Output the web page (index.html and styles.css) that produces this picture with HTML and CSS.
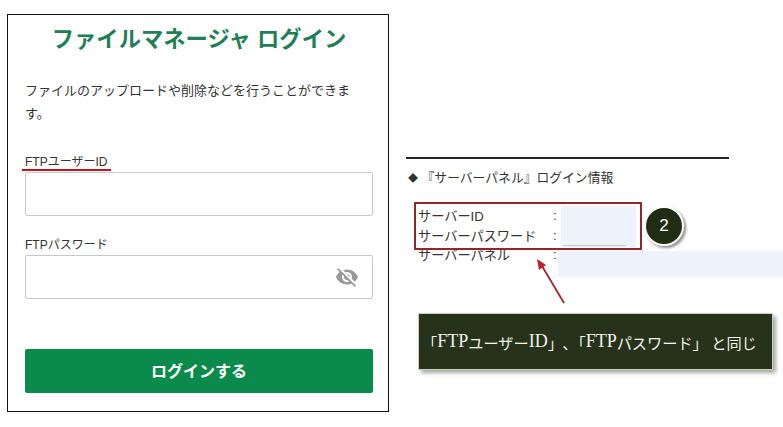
FILE: index.html
```html
<!DOCTYPE html>
<html lang="ja">
<head>
  <meta charset="UTF-8">
  <title>ファイルマネージャ ログイン</title>
  <link rel="stylesheet" href="styles.css">
</head>
<body>

  <div class="page">
    <!-- Login card -->
    <div class="card">
      <h1 class="title">ファイルマネージャ ログイン</h1>
      <p class="lead">ファイルのアップロードや削除などを行うことができます。</p>

      <label class="label label-marked">FTPユーザーID</label>
      <div class="input"></div>

      <label class="label label-pass">FTPパスワード</label>
      <div class="input input-pass">
        <svg class="eye" viewBox="0 0 24 24" width="24" height="24">
          <path d="M12 7c2.76 0 5 2.24 5 5 0 .65-.13 1.26-.36 1.83l2.92 2.92c1.51-1.26 2.7-2.89 3.43-4.75-1.73-4.39-6-7.5-11-7.5-1.4 0-2.74.25-3.98.7l2.16 2.16C10.74 7.13 11.35 7 12 7zM2 4.27l2.28 2.28.46.46C3.08 8.3 1.78 10.02 1 12c1.73 4.39 6 7.5 11 7.5 1.55 0 3.03-.3 4.38-.84l.42.42L19.73 22 21 20.73 3.27 3 2 4.27zM7.53 9.8l1.55 1.55c-.05.21-.08.43-.08.65 0 1.66 1.34 3 3 3 .22 0 .44-.03.65-.08l1.55 1.55c-.67.33-1.41.53-2.2.53-2.76 0-5-2.24-5-5 0-.79.2-1.53.53-2.2zm4.31-.78l3.15 3.15.02-.16c0-1.66-1.34-3-3-3l-.17.01z"/>
        </svg>
      </div>

      <button class="btn">ログインする</button>
    </div>

    <!-- Server panel info -->
    <div class="side">
      <div class="rule"></div>
      <p class="side-title"><span class="bullet">◆</span> 『サーバーパネル』ログイン情報</p>

      <div class="info">
        <div class="row row-id">
          <span class="key">サーバーID</span><span class="colon">:</span>
          <span class="val val-id"></span>
        </div>
        <div class="row row-pass">
          <span class="key">サーバーパスワード</span><span class="colon">:</span>
          <span class="val val-pass"></span>
        </div>
        <div class="row row-panel">
          <span class="key">サーバーパネル</span><span class="colon">:</span>
          <span class="val val-panel"></span>
        </div>

        <div class="red-box"></div>
        <div class="badge">2</div>
        <svg class="arrow" viewBox="0 0 40 56" width="40" height="56">
          <line x1="32" y1="49" x2="10" y2="12" stroke="#a3262e" stroke-width="1.8"/>
          <polygon points="5,5 14,11 7,16" fill="#c01f28"/>
        </svg>
      </div>

      <div class="note">「<span class="latin">FTP</span>ユーザー<span class="latin">ID</span>」､「<span class="latin">FTP</span>パスワード」 と同じ</div>
    </div>
  </div>

</body>
</html>
```

FILE: styles.css
```css
* {
  box-sizing: border-box;
}

body {
  margin: 0;
  background: #fff;
  color: #222;
  font-family: "Liberation Sans", "Noto Sans CJK JP", sans-serif;
}

.page {
  display: flex;
  align-items: flex-start;
  width: 783px;
  height: 427px;
  padding: 14px 0 0 7px;
  overflow: hidden;
}

/* Login card */
.card {
  display: flex;
  flex-direction: column;
  width: 382px;
  height: 398px;
  padding: 0 15px 0 17px;
  border: 1px solid #111;
}

.title {
  margin: 10px 0 0;
  font-size: 22.3px;
  line-height: 30px;
  font-weight: 700;
  text-align: center;
  color: #1f7f59;
}

.lead {
  margin: 24px 0 0;
  font-size: 13px;
  line-height: 23px;
  color: #333;
}

.label {
  display: block;
  font-size: 12px;
  line-height: 18px;
  color: #333;
}

.label-marked {
  position: relative;
  margin-top: 28px;
  height: 19px;
}

.label-marked::after {
  content: "";
  position: absolute;
  left: -3px;
  top: 16px;
  width: 89px;
  height: 2px;
  background: #c3141e;
}

.label-pass {
  margin-top: 20px;
  height: 19px;
}

.input {
  display: flex;
  align-items: center;
  justify-content: flex-end;
  height: 44px;
  padding-right: 13px;
  background: #fff;
  border: 1px solid #c8c8c8;
  border-radius: 2px;
}

.eye {
  fill: #999;
}

.btn {
  height: 44px;
  margin-top: 50px;
  padding-bottom: 4px;
  border: none;
  border-radius: 2px;
  background: #0a8a4b;
  color: #fff;
  font-family: inherit;
  font-size: 16px;
  font-weight: 700;
}

/* Right column */
.side {
  width: 377px;
  margin-left: 17px;
  padding-top: 143px;
}

.rule {
  width: 323px;
  height: 2px;
  background: #222;
}

.side-title {
  margin: 10px 0 0 2px;
  font-size: 12.8px;
  line-height: 18px;
  color: #333;
}

.bullet {
  font-size: 10px;
}

.info {
  position: relative;
  margin-top: 17px;
  padding-left: 12px;
}

.row {
  display: flex;
  align-items: center;
  height: 20px;
  font-size: 13.2px;
  color: #333;
}

.row-panel {
  height: 19px;
}

.key {
  width: 135px;
  white-space: nowrap;
}

.colon {
  width: 8px;
}

.val {
  display: block;
  background: #eef3fb;
}

.val-id {
  align-self: flex-end;
  width: 75px;
  height: 19px;
}

.val-pass {
  position: relative;
  width: 75px;
  height: 22px;
  margin-top: 2px;
}

.val-pass::after {
  content: "";
  position: absolute;
  left: 2px;
  bottom: 1px;
  width: 63px;
  height: 1px;
  background: #c4c8cc;
}

.row-panel .val {
  width: 225px;
  height: 26px;
  margin-left: -3px;
  margin-top: 19px;
}

/* Annotations drawn over the panel */
.red-box {
  position: absolute;
  left: 8px;
  top: -3px;
  width: 228px;
  height: 48px;
  border: 2px solid #93262c;
}

.badge {
  position: absolute;
  left: 238px;
  top: 1px;
  display: flex;
  align-items: center;
  justify-content: center;
  width: 40px;
  height: 40px;
  border-radius: 50%;
  background: #1f2e12;
  border: 2px solid #fff;
  box-shadow: 2px 2px 3px rgba(0, 0, 0, 0.45);
  color: #fff;
  font-size: 17px;
}

.arrow {
  position: absolute;
  left: 126px;
  top: 49px;
}

.note {
  display: flex;
  align-items: center;
  width: 355px;
  height: 57px;
  margin: 49px 0 0 12px;
  padding-left: 3px;
  background: #26321a;
  border: 1px solid #c9d3bb;
  box-shadow: 3px 3px 4px rgba(0, 0, 0, 0.35);
  color: #f2f2ec;
  font-family: "Noto Sans CJK JP", sans-serif;
  font-size: 15.2px;
  white-space: pre;
}

.latin {
  font-family: "Liberation Serif", serif;
  font-size: 18px;
}
```
